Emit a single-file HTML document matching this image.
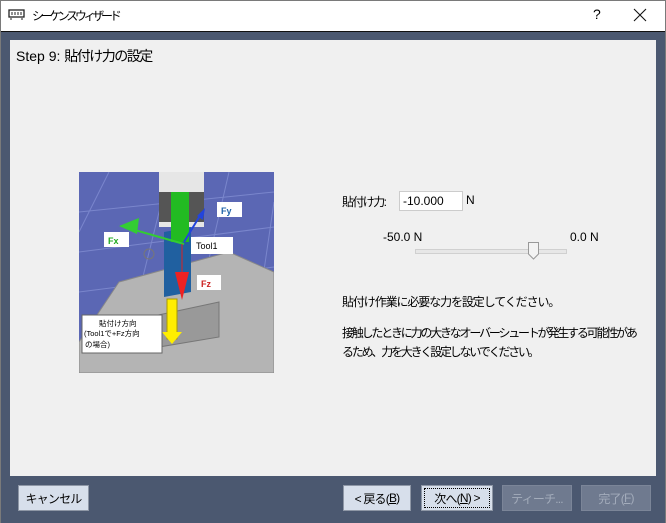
<!DOCTYPE html><html><head><meta charset="utf-8"><style>
body{margin:0;width:666px;height:523px;overflow:hidden;background:#fff;font-family:"Segoe UI","Liberation Sans","Noto Sans CJK JP",sans-serif;font-size:12px;color:#000;position:relative}
.a{position:absolute;white-space:nowrap}
.j{letter-spacing:-1.6px}
.btn{position:absolute;top:485px;height:26px;background:#d7dfeb;border:1px solid #8e97a6;box-sizing:border-box;display:flex;align-items:center;justify-content:center;font-size:12px;letter-spacing:-0.8px}
.dis{background:#6f7a8f;border-color:#7b8598;color:#a3acbb}
</style></head><body>
<div class="a" style="left:0;top:0;width:666px;height:523px;border:1px solid #7a7a7a;box-sizing:border-box"></div>
<svg class="a" style="left:8px;top:9px" width="17" height="12"><rect x="1" y="1" width="15" height="7" fill="none" stroke="#222" stroke-width="1.3"/><path d="M4 3v3M7 3v3M10 3v3M13 3v3M3 9v2M14 9v2" stroke="#222"/></svg>
<div class="a" style="left:32px;top:7px;font-size:12px;letter-spacing:-3.3px">シーケンスウィザード</div>
<div class="a" style="left:593px;top:6px;font-size:14px">?</div>
<svg class="a" style="left:633px;top:8px" width="14" height="14"><path d="M1 1L13 13M13 1L1 13" stroke="#111" stroke-width="1.1"/></svg>
<div class="a" style="left:1px;top:31px;width:664px;height:491px;background:#4b5870;border-top:1px solid #111"></div>
<div class="a" style="left:10px;top:40px;width:646px;height:436px;background:#f0f0f0"></div>
<div class="a" style="left:16px;top:46px;font-size:14px">Step 9: <span style="letter-spacing:-1.5px">貼付け力の設定</span></div>
<svg class="a" style="left:79px;top:172px" width="195" height="201">
<rect width="195" height="201" fill="#5b67b4"/>
<g stroke="#7a86cc" stroke-width="1"><path d="M0 40L195 20M0 80L195 55M0 120L195 95M30 0L0 60M90 0L40 201M150 0L120 130M195 30L170 201"/></g>
<polygon points="40,110 150,80 195,100 195,201 0,201 0,170" fill="#b4b4b4" stroke="#888"/>
<circle cx="70" cy="82" r="5" fill="none" stroke="#777"/>
<polygon points="85,60 112,55 112,120 85,125" fill="#2060a0"/>
<rect x="80" y="0" width="45" height="55" fill="#e6e6e6"/>
<rect x="80" y="20" width="45" height="30" fill="#555"/>
<rect x="92" y="20" width="18" height="50" fill="#22bb22"/>
<path d="M105 72L45 55" stroke="#33cc33" stroke-width="2"/><polygon points="40,54 60,46 58,62" fill="#33cc33"/>
<path d="M105 70L122 42" stroke="#2244dd" stroke-width="2"/><polygon points="126,36 118,44 124,48" fill="#2244dd"/>
<path d="M103 72L103 110" stroke="#dd2222"/><polygon points="96,100 110,100 103,128" fill="#ee2222"/>
<polygon points="70,145 140,130 140,165 80,175" fill="#999" stroke="#777"/>
<rect x="88" y="127" width="10" height="40" fill="#ffee00" stroke="#aa9900"/><polygon points="83,160 103,160 93,172" fill="#ffee00"/>
<rect x="138" y="30" width="25" height="15" fill="#fff"/><text x="142" y="42" font-family="Liberation Sans" font-weight="bold" font-size="9" fill="#2266aa">Fy</text>
<rect x="25" y="60" width="25" height="15" fill="#fff"/><text x="29" y="72" font-family="Liberation Sans" font-weight="bold" font-size="9" fill="#22aa22">Fx</text>
<rect x="112" y="65" width="42" height="17" fill="#fff"/><text x="117" y="77" font-family="Liberation Sans" font-size="9">Tool1</text>
<rect x="118" y="103" width="24" height="15" fill="#fff"/><text x="122" y="115" font-family="Liberation Sans" font-weight="bold" font-size="9" fill="#cc2222">Fz</text>
<rect x="3" y="143" width="80" height="38" fill="#fff" stroke="#666"/>
<text x="20" y="154" font-family="Liberation Sans,Noto Sans CJK JP" font-size="7.5">貼付け方向</text>
<text x="5" y="164" font-family="Liberation Sans,Noto Sans CJK JP" font-size="7.5">(Tool1で+Fz方向</text>
<text x="6" y="175" font-family="Liberation Sans,Noto Sans CJK JP" font-size="7.5">の場合)</text>
</svg>
<div class="a j" style="left:342px;top:193px">貼付け力:</div>
<div class="a" style="left:399px;top:191px;width:64px;height:20px;background:#fff;border:1px solid #ccc;box-sizing:border-box;padding:2px 0 0 3px">-10.000</div>
<div class="a" style="left:466px;top:193px">N</div>
<div class="a" style="left:383px;top:230px">-50.0 N</div>
<div class="a" style="left:570px;top:230px">0.0 N</div>
<div class="a" style="left:415px;top:249px;width:150px;height:3px;background:#e7e7e7;border:1px solid #d0d0d0"></div>
<svg class="a" style="left:528px;top:242px" width="12" height="18"><path d="M0.5 0.5H10.5V12L5.5 17L0.5 12Z" fill="#f3f3f3" stroke="#999"/></svg>
<div class="a" style="left:342px;top:293px;letter-spacing:-1.1px">貼付け作業に必要な力を設定してください。</div>
<div class="a" style="left:342px;top:324px;line-height:19px;letter-spacing:-2.2px">接触したときに力の大きなオーバーシュートが発生する可能性があ<br>るため、力を大きく設定しないでください。</div>
<div class="btn" style="left:18px;width:71px">キャンセル</div>
<div class="btn" style="left:343px;width:68px">&lt; 戻る(<u>B</u>)</div>
<div class="btn" style="left:421px;width:72px;outline:1px dotted #000;outline-offset:-4px">次へ(<u>N</u>) &gt;</div>
<div class="btn dis" style="left:502px;width:70px">ティーチ...</div>
<div class="btn dis" style="left:581px;width:70px">完了(<u>F</u>)</div>
</body></html>
